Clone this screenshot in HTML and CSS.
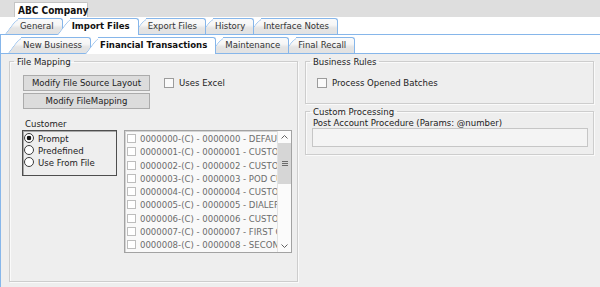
FILE: index.html
```
<!DOCTYPE html>
<html lang="en">
<head>
    <meta charset="utf-8">
    <title>ABC Company - Import Files</title>
    <link rel="stylesheet" href="styles.css">
</head>
<body>

<div class="titlebar">
    <div class="doc-tab">ABC Company</div>
</div>

<div class="tabrow main-tabs">
    <div class="tab"><span>General</span></div>
    <div class="tab active"><span>Import Files</span></div>
    <div class="tab"><span>Export Files</span></div>
    <div class="tab"><span>History</span></div>
    <div class="tab"><span>Interface Notes</span></div>
</div>

<div class="tabpage">
    <div class="tabrow sub-tabs">
        <div class="tab"><span>New Business</span></div>
        <div class="tab active"><span>Financial Transactions</span></div>
        <div class="tab"><span>Maintenance</span></div>
        <div class="tab"><span>Final Recall</span></div>
    </div>

    <div class="content">
        <fieldset class="group file-mapping">
            <legend>File Mapping</legend>
            <div class="group-body">
                <div class="fm-top">
                    <div class="buttons">
                        <div class="btn">Modify File Source Layout</div>
                        <div class="btn">Modify FileMapping</div>
                    </div>
                    <label class="check"><span class="box"></span>Uses Excel</label>
                </div>

                <div class="fm-bottom">
                    <div class="customer-label">Customer</div>
                    <div class="radios">
                        <div class="radio checked"><span class="dot"></span>Prompt</div>
                        <div class="radio"><span class="dot"></span>Predefined</div>
                        <div class="radio"><span class="dot"></span>Use From File</div>
                    </div>
                    <div class="list">
                        <div class="list-items">
                            <div class="list-item"><span class="cb"></span>0000000-(C) - 0000000 - DEFAULT</div>
                            <div class="list-item"><span class="cb"></span>0000001-(C) - 0000001 - CUSTOMER</div>
                            <div class="list-item"><span class="cb"></span>0000002-(C) - 0000002 - CUSTOMER</div>
                            <div class="list-item"><span class="cb"></span>0000003-(C) - 0000003 - POD CUSTOMER</div>
                            <div class="list-item"><span class="cb"></span>0000004-(C) - 0000004 - CUSTOMER</div>
                            <div class="list-item"><span class="cb"></span>0000005-(C) - 0000005 - DIALER</div>
                            <div class="list-item"><span class="cb"></span>0000006-(C) - 0000006 - CUSTOMER</div>
                            <div class="list-item"><span class="cb"></span>0000007-(C) - 0000007 - FIRST CUSTOMER</div>
                            <div class="list-item"><span class="cb"></span>0000008-(C) - 0000008 - SECOND CUSTOMER</div>
                        </div>
                        <div class="scrollbar">
                            <div class="sb-btn">
                                <svg width="7" height="4" viewBox="0 0 7 4"><polyline points="0.5,3.5 3.5,0.5 6.5,3.5" fill="none" stroke="#606060" stroke-width="1"/></svg>
                            </div>
                            <div class="sb-thumb">
                                <svg width="6" height="5" viewBox="0 0 6 5"><path d="M0 0.5H6M0 2.5H6M0 4.5H6" stroke="#6a6a6a" stroke-width="1"/></svg>
                            </div>
                            <div class="sb-track"></div>
                            <div class="sb-btn">
                                <svg width="7" height="4" viewBox="0 0 7 4"><polyline points="0.5,0.5 3.5,3.5 6.5,0.5" fill="none" stroke="#606060" stroke-width="1"/></svg>
                            </div>
                        </div>
                    </div>
                </div>
            </div>
        </fieldset>

        <div class="right-col">
            <fieldset class="group business-rules">
                <legend>Business Rules</legend>
                <div class="group-body">
                    <label class="check"><span class="box"></span>Process Opened Batches</label>
                </div>
            </fieldset>

            <fieldset class="group custom-processing">
                <legend>Custom Processing</legend>
                <div class="group-body">
                    <div class="field-label">Post Account Procedure (Params: @number)</div>
                    <div class="textbox"></div>
                </div>
            </fieldset>
        </div>
    </div>
</div>

</body>
</html>
```

FILE: styles.css
```
* {
    box-sizing:border-box;
}

body {
    margin:0;
    width:600px;
    height:287px;
    overflow:hidden;
    background:#eeeeee;
    color:#222;
    font-family:"DejaVu Sans Condensed", "DejaVu Sans", sans-serif;
    font-size:9.5px;
    font-stretch:condensed;
}

/* document tab strip */
.titlebar {
    height:17px;
    padding:2px 0 0 14px;
    background:#dedede;
}

.doc-tab {
    width:74px;
    height:15px;
    padding:1px 0 0 3px;
    background:#fff;
    border:1px solid #c4c4c4;
    border-bottom:0;
    border-top-right-radius:2px;
    font-weight:bold;
    font-size:10px;
    line-height:13px;
    color:#111;
    white-space:nowrap;
}

/* slanted tabs */
.tabrow {
    display:flex;
    align-items:flex-end;
    background:#fff;
    border-bottom:1px solid #86b6ea;
}

.main-tabs {
    height:18px;
    padding-left:5px;
}

.sub-tabs {
    height:19px;
    padding-left:7px;
}

.tab {
    position:relative;
    height:16px;
    padding:1px 9px 0 15px;
    margin-left:-6px;
    line-height:14px;
    color:#333;
    white-space:nowrap;
}

.tab:first-child { margin-left:0; z-index:9; }
.tab:nth-child(2) { z-index:8; }
.tab:nth-child(3) { z-index:7; }
.tab:nth-child(4) { z-index:6; }
.tab:nth-child(5) { z-index:5; }

.tab span {
    position:relative;
    z-index:1;
}

.tab::before, .tab::after {
    content:"";
    position:absolute;
    top:0;
    bottom:0;
    background:linear-gradient(#fafafa 0, #f6f6f6 40%, #e4e4e4 60%, #e2e2e2 100%);
}

.tab::before {
    left:0;
    width:26px;
    border-left:1px solid #86b6ea;
    border-top:1px solid #86b6ea;
    border-top-left-radius:6px;
    transform:skewX(-37deg);
    transform-origin:0 100%;
}

.tab::after {
    left:13px;
    right:0;
    border-top:1px solid #86b6ea;
    border-right:1px solid #86b6ea;
    border-top-right-radius:3px;
}

.tab.active {
    z-index:20;
    height:17px;
    margin-bottom:-1px;
    font-weight:bold;
    color:#111;
}

.tab.active::before, .tab.active::after {
    background:#fff;
}

.tabpage {
    border-left:1px solid #86b6ea;
}

/* page content */
.content {
    display:grid;
    grid-template-columns:289px 289px;
    column-gap:7px;
    align-items:start;
    height:233px;
    padding:1px 0 0 8px;
    background:#eeeeee;
}

.group {
    margin:0;
    padding:0;
    border:1px solid #cdcdcd;
    box-shadow:inset 1px 1px 0 #fafafa, 1px 1px 0 #fafafa;
    min-width:0;
}

.group legend {
    margin-left:4px;
    padding:0 3px;
    line-height:13px;
    color:#222;
}

.file-mapping {
    height:227px;
}

.file-mapping .group-body {
    padding:7px 0 0 12px;
}

.fm-top {
    display:flex;
    align-items:flex-start;
}

.buttons {
    display:flex;
    flex-direction:column;
    gap:2px;
    margin-left:1px;
}

.btn {
    width:127px;
    height:16px;
    line-height:14px;
    text-align:center;
    white-space:nowrap;
    background:#dcdcdc;
    border:1px solid #ababab;
    color:#222;
}

.check {
    display:flex;
    align-items:center;
    gap:5px;
    line-height:13px;
    color:#222;
    white-space:nowrap;
}

.check .box {
    width:10px;
    height:10px;
    border:1px solid #9c9c9c;
    background:#fafafa;
}

.fm-top .check {
    margin:1px 0 0 14px;
}

.fm-bottom {
    display:grid;
    grid-template-columns:95px 168px;
    column-gap:7px;
    margin-top:8px;
}

.customer-label {
    grid-column:1 / 3;
    padding-left:3px;
    line-height:13px;
}

.radios {
    height:46px;
    padding-top:1px;
    border:1px solid #4e4e4e;
    box-shadow:inset 1px 1px 0 #a8a8a8;
}

.radio {
    display:flex;
    align-items:center;
    gap:4px;
    height:12px;
    padding-left:1px;
    color:#222;
    white-space:nowrap;
}

.radio .dot {
    width:10px;
    height:10px;
    border:1px solid #3c3c3c;
    border-radius:50%;
    background:#fff;
}

.radio.checked .dot {
    background:radial-gradient(circle, #111 0, #111 2px, #fff 2.6px);
}

.list {
    display:flex;
    height:123px;
    border:1px solid #a2a2a2;
    box-shadow:inset 1px 1px 0 #d4d4d4;
    background:#f9f9f9;
}

.list-items {
    flex:1;
    min-width:0;
    overflow:hidden;
    padding:1px 0 0 2px;
    color:#6c6c6c;
}

.list-item {
    display:flex;
    align-items:center;
    gap:4px;
    height:13.25px;
    white-space:nowrap;
}

.list-item .cb {
    flex:none;
    width:9px;
    height:9px;
    border:1px solid #bdbdbd;
    background:#fff;
}

.scrollbar {
    display:flex;
    flex-direction:column;
    width:14px;
    border-left:1px solid #e2e2e2;
    background:#fbfbfb;
}

.sb-btn {
    display:flex;
    align-items:center;
    justify-content:center;
    height:12px;
}

.sb-thumb {
    display:flex;
    align-items:center;
    justify-content:center;
    height:41px;
    background:#d6d6d6;
}

.sb-track {
    flex:1;
}

/* right column */
.right-col {
    display:flex;
    flex-direction:column;
    gap:1px;
}

.business-rules {
    height:49px;
}

.business-rules .group-body {
    padding:8px 0 0 11px;
}

.custom-processing {
    height:50px;
}

.custom-processing .group-body {
    padding:0 5px 0 6px;
}

.field-label {
    margin:-2px 0 0 1px;
    line-height:13px;
    white-space:nowrap;
}

.textbox {
    height:19px;
    margin-top:-1px;
    border:1px solid #c6c6c6;
    background:#f4f4f4;
}
```
